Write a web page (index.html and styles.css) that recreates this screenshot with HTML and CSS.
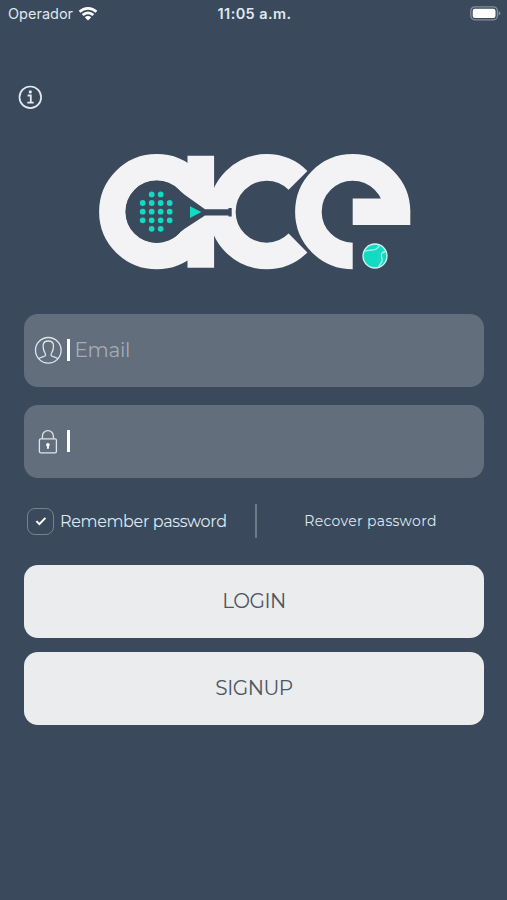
FILE: index.html
```html
<!DOCTYPE html>
<html lang="en">
  <head>
    <meta charset="UTF-8" />
    <meta name="viewport" content="width=device-width, initial-scale=1.0" />
    <title>Ace</title>
    <link rel="stylesheet" href="styles.css">
  </head>
  <body>
    <header class="status-bar">
      <div class="carrier">
        <span class="carrier-name">Operador</span>
        <svg class="wifi" viewBox="0 0 20 15">
          <g fill="none" stroke="#fff" stroke-width="2.6">
            <path d="M1.6 5.8a12 12 0 0 1 16.8 0" />
            <path d="M4.7 9a7.6 7.6 0 0 1 10.6 0" />
          </g>
          <path d="M6.8 11.2a4.6 4.6 0 0 1 6.4 0L10 14.5z" fill="#fff" />
        </svg>
      </div>
      <div class="time">11:05 a.m.</div>
      <svg class="battery" viewBox="0 0 31 15">
        <rect x="0.8" y="0.8" width="26.6" height="13" rx="4" fill="none" stroke="#84909b" stroke-width="1.3" />
        <rect x="2.7" y="2.7" width="22.8" height="9.2" rx="2.2" fill="#fff" />
        <path d="M28.7 5v4.6q1.7-.8 1.7-2.3t-1.7-2.3z" fill="#84909b" />
      </svg>
    </header>

    <button class="info" aria-label="Info">
      <svg viewBox="0 0 24 24">
        <circle cx="12.3" cy="12.3" r="10.8" fill="none" stroke="#e4eaf1" stroke-width="1.7" />
        <circle cx="12.3" cy="6.9" r="1.6" fill="#e4eaf1" />
        <path d="M9.6 10.5h3.2v7M9.3 17.6h6.4" fill="none" stroke="#e4eaf1" stroke-width="1.8" />
      </svg>
    </button>

    <svg class="logo" viewBox="98 153 314 118" role="img" aria-label="ace">
      <g fill="none" stroke="#f3f3f5" stroke-width="26.6">
        <circle cx="156.7" cy="211.7" r="44.3" />
        <path d="M200.8 155.7v112" />
        <path d="M298 180.4a44.3 44.3 0 1 0 0 62.6" />
        <path d="M352.7 256a44.3 44.3 0 1 1 44.3-44.3" />
        <path d="M352.7 211.7H397" />
      </g>
      <path d="M396 211h14.3v14H396z" fill="#f3f3f5" />

      <!-- racket -->
      <g fill="#3a495b">
        <circle cx="156.7" cy="211.7" r="31.2" />
        <path d="M175 186.5Q180 191 185 195L205 209.2H228.5V208H231.7V216.6H228.5V215.4H205L185 228.6Q180 232 175 236.9z" />
      </g>
      <path d="M190 206.3v11.6l11.4-5.8z" fill="#12dac3" />
      <g fill="none" stroke="#12dac3" stroke-width="5.8" stroke-linecap="round" stroke-dasharray="0 9">
        <path d="M151.7 194.4h9.2" />
        <path d="M142.7 203h27.2" />
        <path d="M142.7 211.7h27.2" />
        <path d="M142.7 220.3h27.2" />
        <path d="M151.7 228.8h9.2" />
      </g>

      <!-- ball -->
      <circle cx="375" cy="256" r="12" fill="#12dac3" stroke="#d5f3f0" stroke-width="1.3" />
      <path d="M364.8 251.5C368 248.5 377 253 379.5 245M386 251.5C378 252.5 383 258 382 261Q380.5 264 378.5 267" fill="none" stroke="#a5ece5" stroke-width="1.4" />
    </svg>

    <form class="login-form">
      <label class="field">
        <svg class="user-icon" viewBox="0 0 28 28">
          <g fill="none" stroke="#dce5ec" stroke-width="1.3">
            <circle cx="14.3" cy="14.3" r="12.8" />
            <path d="M4.7 22.8C7.3 20.7 11.3 21 11.6 19.1C11.9 17.3 9 16.1 9.1 9.7C9.2 6.7 11.3 5 14.3 5s5.1 1.7 5.2 4.7c.1 6.4-2.8 7.6-2.5 9.4c.3 1.9 4.3 1.6 6.9 3.7" />
          </g>
        </svg>
        <span class="caret"></span>
        <input class="field-input" type="text" placeholder="Email" />
      </label>
      <label class="field">
        <svg class="lock-icon" viewBox="0 0 28 28">
          <g fill="none" stroke="#dce5ec" stroke-width="1.3">
            <rect x="5.4" y="11.8" width="17" height="14" rx="1.4" />
            <path d="M8.4 11.8V9.2a5.5 5.5 0 0 1 11 0v2.6" />
          </g>
          <path d="M13.9 16a1.8 1.8 0 0 1 1 3.3v2.5h-2v-2.5a1.8 1.8 0 0 1 1-3.3z" fill="#fff" />
        </svg>
        <span class="caret"></span>
        <input class="field-input" type="password" aria-label="Password" />
      </label>

      <div class="options">
        <div class="remember">
          <span class="checkbox">
            <svg viewBox="0 0 12 12">
              <path d="M1.4 6.1l3 3 6-6.2" fill="none" stroke="#fff" stroke-width="2" />
            </svg>
          </span>
          <span class="remember-text">Remember password</span>
        </div>
        <div class="recover"><span class="recover-text">Recover password</span></div>
      </div>

      <button class="btn" type="button">LOGIN</button>
      <button class="btn" type="button">SIGNUP</button>
    </form>
  </body>
</html>
```
FILE: styles.css
```css
* {
  box-sizing: border-box;
}
body {
  margin: 0;
  height: 900px;
  overflow: hidden;
  background-color: #3a495b;
  color: #dfe8f1;
  font-family: Montserrat, Inter, sans-serif;
}
svg {
  display: block;
}

/* Status bar */
.status-bar {
  display: grid;
  grid-template-columns: 1fr auto 1fr;
  align-items: center;
  height: 27px;
  padding: 0 6px 0 8px;
  font-family: Inter, sans-serif;
}
.carrier {
  display: flex;
  align-items: center;
  gap: 5px;
}
.carrier-name {
  font-size: 14.5px;
}
.wifi {
  width: 20px;
  height: 15px;
}
.time {
  font-size: 14.5px;
  font-weight: 600;
  letter-spacing: 0.4px;
}
.battery {
  width: 31px;
  height: 15px;
  justify-self: end;
}

.info {
  display: block;
  width: 24px;
  height: 24px;
  margin: 58px 0 0 18px;
  padding: 0;
  border: none;
  background: none;
}
.logo {
  width: 314px;
  height: 118px;
  margin: 44px 0 0 98px;
}

/* Form */
.login-form {
  padding: 43px 23px 0 24px;
}
.field {
  display: flex;
  align-items: center;
  height: 73px;
  margin-bottom: 18px;
  padding: 0 0 1px 10px;
  background-color: #626e7b;
  border-radius: 14px;
}
.user-icon,
.lock-icon {
  width: 28px;
  height: 28px;
}
.caret {
  width: 2.5px;
  height: 22px;
  margin: 0 5px;
  background-color: #fff;
}
.field-input {
  flex: 1;
  min-width: 0;
  padding: 0 0 1px;
  border: none;
  outline: none;
  background: none;
  color: #fff;
  font-family: inherit;
  font-size: 20px;
  letter-spacing: -0.3px;
}
.field-input::placeholder {
  color: #a3adb6;
  opacity: 1;
}

.options {
  display: flex;
  align-items: center;
  height: 34px;
  margin: 26px 0 27px;
}
.remember {
  display: flex;
  align-items: center;
  gap: 6px;
  width: 233px;
  height: 34px;
  padding-left: 3px;
  border-right: 2px solid #6d7a88;
}
.checkbox {
  display: flex;
  align-items: center;
  justify-content: center;
  width: 27px;
  height: 27px;
  border: 1.5px solid #75828f;
  border-radius: 8px;
}
.checkbox svg {
  width: 12px;
  height: 12px;
}
.remember-text {
  padding-top: 1px;
  font-size: 16px;
  letter-spacing: -0.35px;
  white-space: nowrap;
}
.recover {
  flex: 1;
  padding-bottom: 2px;
  text-align: center;
}
.recover-text {
  font-size: 14px;
  letter-spacing: 0.35px;
}

.btn {
  display: block;
  width: 100%;
  height: 73px;
  margin-bottom: 14px;
  padding: 0 0 2px;
  border: none;
  border-radius: 14px;
  background-color: #ebecee;
  color: #4d5662;
  font-family: inherit;
  font-size: 20px;
  letter-spacing: -0.5px;
}
```
